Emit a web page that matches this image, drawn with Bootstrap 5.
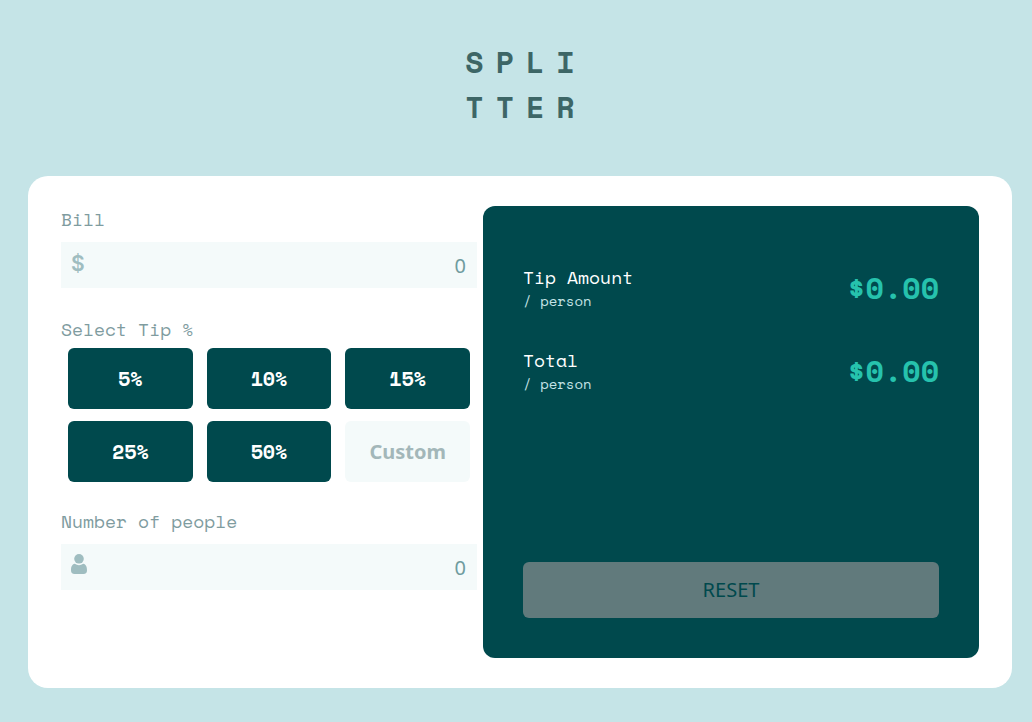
<!DOCTYPE html>
<html lang="en">
<head>
<meta charset="utf-8">
<meta name="viewport" content="width=device-width, initial-scale=1">
<title>Splitter</title>
<link href="https://cdn.jsdelivr.net/npm/bootstrap@5.3.0/dist/css/bootstrap.min.css" rel="stylesheet">
<style>
  :root { --deep: #00494d; --mist: #c5e4e7; --pale: #f4fafa; --soft: #9fbdc0; --slate: #7f9c9f; --mint: #26c2ad; }
  body { background: var(--mist); font-family: "Space Mono", "Liberation Mono", monospace; font-size: 18px; line-height: 27px; color: var(--slate); }
  .brand-title { padding: 39px 0 47px 20px; font-size: 30px; line-height: 45px; letter-spacing: 12px; font-weight: 700; color: #3d6666; }
  .calc { margin: 0 20px 34px 28px; padding: 30px 33px; border-radius: 20px; background: #fff; display: grid; grid-template-columns: 26fr 31fr; column-gap: 6px; }
  .field-label { display: block; margin-bottom: 9px; }
  .field-box { height: 46px; background: var(--pale); color: var(--soft); padding: 0 11px 0 10px; }
  .field-box svg { margin-bottom: 6px; }
  .field-box .sign { padding-bottom: 4px; font-family: Inter, "Liberation Sans", sans-serif; font-size: 21px; font-weight: 600; }
  .field-box input, .tip-custom, .reset-btn { font-family: Tahoma, "Noto Sans", sans-serif; font-size: 20px; }
  .field-box input { color: #6f9c9f; text-align: right; outline: 0; }
  .field-box input::placeholder { color: #6f9c9f; opacity: 1; }
  .tip-group { margin: 28px 0 26px; }
  .tip-group legend { margin-bottom: 5px; font-size: 18px; line-height: 27px; }
  .tips { display: grid; grid-template-columns: repeat(3, 1fr); gap: 12px 14px; padding: 0 7px; }
  .tip-btn, .tip-custom { height: 61px; border: 0; border-radius: 6px; padding: 0; min-width: 0; width: 100%; font-weight: 700; text-align: center; }
  .tip-btn { background: var(--deep); color: #fff; font-size: 20px; }
  .tip-btn:hover { background: var(--mint); color: var(--deep); }
  .tip-custom { background: var(--pale); color: #547878; }
  .tip-custom::placeholder { color: #a3b7b9; opacity: 1; }
  .result { min-height: 452px; padding: 58px 40px 40px; border-radius: 12px; background: var(--deep); color: #fff; }
  .result-row { height: 48px; margin-bottom: 35px; }
  .per { font-size: 14px; line-height: 19px; color: var(--mist); }
  .amount { font-size: 30px; line-height: 48px; font-weight: 700; color: var(--mint); }
  .reset-btn, .reset-btn:disabled { height: 56px; border: 0; border-radius: 6px; background: #617a7c; color: var(--deep); opacity: 1; }
  @media (max-width: 767px) {
    .calc { grid-template-columns: 1fr; row-gap: 30px; margin: 0; padding: 30px 24px; }
  }
</style>
</head>
<body>
<header class="text-center">
  <h1 class="brand-title mb-0">SPLI<br>TTER</h1>
</header>
<main class="calc">
  <form>
    <label class="field-label" for="bill">Bill</label>
    <div class="field-box d-flex align-items-center">
      <span class="sign">$</span>
      <input id="bill" class="border-0 bg-transparent flex-grow-1 w-100 p-0" type="text" inputmode="decimal" placeholder="0">
    </div>
    <fieldset class="tip-group">
      <legend>Select Tip %</legend>
      <div class="tips">
        <button type="button" class="btn tip-btn">5%</button>
        <button type="button" class="btn tip-btn">10%</button>
        <button type="button" class="btn tip-btn">15%</button>
        <button type="button" class="btn tip-btn">25%</button>
        <button type="button" class="btn tip-btn">50%</button>
        <input class="tip-custom" type="text" inputmode="decimal" placeholder="Custom" aria-label="Custom tip">
      </div>
    </fieldset>
    <label class="field-label" for="people">Number of people</label>
    <div class="field-box d-flex align-items-center">
      <svg width="16" height="20" viewBox="0 0 16 20" class="flex-shrink-0" aria-hidden="true" fill="currentColor"><circle cx="8" cy="4.8" r="4.8"/><path d="M3.7 9.8Q8 12.6 12.3 9.8C15 10.3 16 13 16 16.200Q16 20 12.500 20H3.500Q0 20 0 16.200C0 13 1 10.300 3.700 9.800Z"/></svg>
      <input id="people" class="border-0 bg-transparent flex-grow-1 w-100 p-0" type="text" inputmode="numeric" placeholder="0">
    </div>
  </form>
  <section class="result d-flex flex-column">
    <div class="result-row d-flex justify-content-between">
      <div>Tip Amount<div class="per">/ person</div></div>
      <output class="amount">$0.00</output>
    </div>
    <div class="result-row d-flex justify-content-between">
      <div>Total<div class="per">/ person</div></div>
      <output class="amount">$0.00</output>
    </div>
    <button type="button" class="btn reset-btn w-100 mt-auto" disabled>RESET</button>
  </section>
</main>
<script src="https://cdn.jsdelivr.net/npm/bootstrap@5.3.0/dist/js/bootstrap.bundle.min.js"></script>
</body>
</html>
